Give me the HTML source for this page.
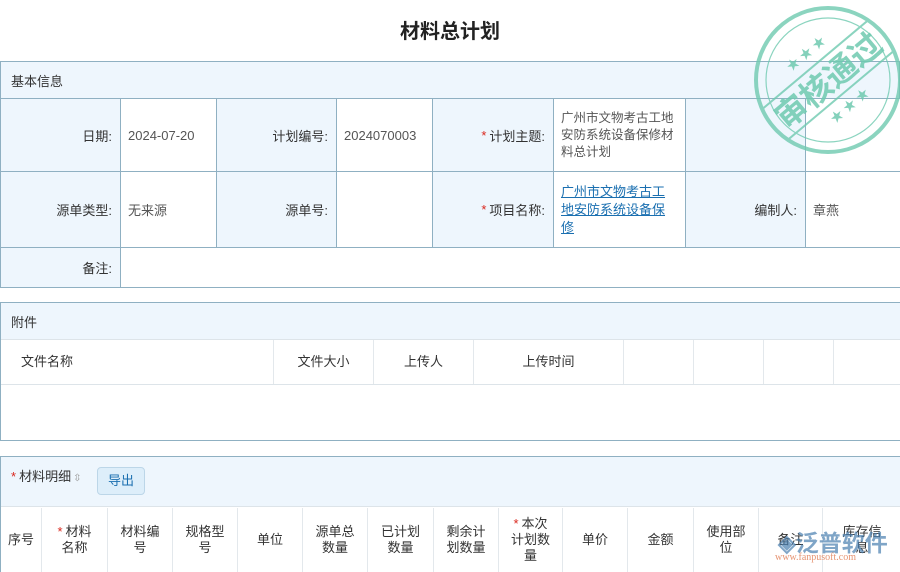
<!DOCTYPE html>
<html><head><meta charset="utf-8"><style>
*{margin:0;padding:0;box-sizing:border-box}
body{width:900px;height:572px;overflow:hidden;background:#fff;font-family:"Liberation Sans","Noto Sans CJK SC",sans-serif;font-size:13px;color:#333;position:relative}
.a{position:absolute}
.c{position:absolute;display:flex;align-items:center;border-right:1px solid #8fb0c2;border-bottom:1px solid #8fb0c2}
.l{background:#eef6fd;justify-content:flex-end;padding-right:8px}
.v{background:#fff;padding-left:7px;color:#555}
.s{color:#d9261c;margin-right:3px}
.h{position:absolute;display:flex;align-items:center;justify-content:center;text-align:center;border-left:1px solid #e3e8ec;height:100%;line-height:16px}
</style></head><body>
<div class="a" style="left:0;top:15px;width:900px;text-align:center;font-size:20px;font-weight:bold;color:#222">材料总计划</div>

<div class="a" style="left:0;top:61px;width:900px;height:227px;border-top:1px solid #8fb0c2;border-left:1px solid #8fb0c2"></div>
<div class="c" style="left:0;top:62px;width:900px;height:37px;background:#eef6fd;padding-left:10px;border-left:1px solid #8fb0c2">基本信息</div>
<div class="c l" style="left:0;top:99px;width:121px;height:73px;border-left:1px solid #8fb0c2">日期:</div>
<div class="c v" style="left:121px;top:99px;width:96px;height:73px">2024-07-20</div>
<div class="c l" style="left:217px;top:99px;width:120px;height:73px">计划编号:</div>
<div class="c v" style="left:337px;top:99px;width:96px;height:73px">2024070003</div>
<div class="c l" style="left:433px;top:99px;width:121px;height:73px"><span class="s">*</span>计划主题:</div>
<div class="c v" style="left:554px;top:99px;width:132px;height:73px;font-size:12.5px;line-height:17px">广州市文物考古工地安防系统设备保修材料总计划</div>
<div class="c l" style="left:686px;top:99px;width:120px;height:73px"></div>
<div class="c v" style="left:806px;top:99px;width:94px;height:73px;border-right:none"></div>
<div class="c l" style="left:0;top:172px;width:121px;height:76px;border-left:1px solid #8fb0c2">源单类型:</div>
<div class="c v" style="left:121px;top:172px;width:96px;height:76px">无来源</div>
<div class="c l" style="left:217px;top:172px;width:120px;height:76px">源单号:</div>
<div class="c v" style="left:337px;top:172px;width:96px;height:76px"></div>
<div class="c l" style="left:433px;top:172px;width:121px;height:76px"><span class="s">*</span>项目名称:</div>
<div class="c v" style="left:554px;top:172px;width:132px;height:76px;line-height:18px;color:#1a6fb0;text-decoration:underline;padding-right:20px">广州市文物考古工地安防系统设备保修</div>
<div class="c l" style="left:686px;top:172px;width:120px;height:76px">编制人:</div>
<div class="c v" style="left:806px;top:172px;width:94px;height:76px;border-right:none">章燕</div>
<div class="c l" style="left:0;top:248px;width:121px;height:40px;border-left:1px solid #8fb0c2">备注:</div>
<div class="c v" style="left:121px;top:248px;width:779px;height:40px;border-right:none"></div>

<div class="a" style="left:0;top:302px;width:900px;height:139px;border:1px solid #8fb0c2;border-right:none"></div>
<div class="a" style="left:1px;top:303px;width:899px;height:37px;background:#eef6fd;border-bottom:1px solid #dde4e9;padding:9px 0 0 10px">附件</div>
<div class="a" style="left:1px;top:340px;width:899px;height:45px;border-bottom:1px solid #dde4e9">
<div class="h" style="left:0;width:272px;border:none;justify-content:flex-start;padding-left:20px">文件名称</div>
<div class="h" style="left:272px;width:100px">文件大小</div>
<div class="h" style="left:372px;width:100px">上传人</div>
<div class="h" style="left:472px;width:150px">上传时间</div>
<div class="h" style="left:622px;width:70px"></div>
<div class="h" style="left:692px;width:70px"></div>
<div class="h" style="left:762px;width:70px"></div>
<div class="h" style="left:832px;width:70px"></div>
</div>

<div class="a" style="left:0;top:456px;width:900px;height:116px;border-top:1px solid #8fb0c2;border-left:1px solid #8fb0c2"></div>
<div class="a" style="left:1px;top:457px;width:899px;height:50px;background:#eef6fd;border-bottom:1px solid #dde4e9"></div>
<div class="a" style="left:11px;top:466px"><span class="s">*</span>材料明细<span style="color:#999;font-size:10px;margin-left:2px">⇳</span></div>
<div class="a" style="left:97px;top:467px;width:48px;height:28px;background:#ddeefa;border:1px solid #bcd6e8;border-radius:4px;color:#1a6fb0;text-align:center;line-height:26px">导出</div>
<div class="a" style="left:1px;top:508px;width:899px;height:64px">
<div class="h" style="left:0;width:40px;border:none">序号</div>
<div class="h" style="left:40px;width:66px"><span><span class="s">*</span>材料<br>名称</span></div>
<div class="h" style="left:106px;width:65px">材料编<br>号</div>
<div class="h" style="left:171px;width:65px">规格型<br>号</div>
<div class="h" style="left:236px;width:65px">单位</div>
<div class="h" style="left:301px;width:65px">源单总<br>数量</div>
<div class="h" style="left:366px;width:66px">已计划<br>数量</div>
<div class="h" style="left:432px;width:65px">剩余计<br>划数量</div>
<div class="h" style="left:497px;width:64px"><span><span class="s">*</span>本次<br>计划数<br>量</span></div>
<div class="h" style="left:561px;width:65px">单价</div>
<div class="h" style="left:626px;width:66px">金额</div>
<div class="h" style="left:692px;width:65px">使用部<br>位</div>
<div class="h" style="left:757px;width:64px">备注</div>
<div class="h" style="left:821px;width:79px">库存信<br>息</div>
</div>
<div class="a" style="left:778px;top:524px;font-size:23px;color:#4a7fb0;opacity:.7;font-weight:bold">◈泛普软件</div>
<div class="a" style="left:775px;top:552px;font-size:10px;color:#e07a50;opacity:.8;font-family:'Liberation Serif',serif">www.fanpusoft.com</div>

<svg class="a" style="left:748px;top:2px" width="160" height="160" viewBox="0 0 160 160">
<g fill="none" stroke="#6fcab0" opacity=".8">
<circle cx="80" cy="78" r="72" stroke-width="4"/>
<circle cx="80" cy="78" r="62" stroke-width="1.2"/>
<g transform="rotate(-40 80 78)">
<line x1="10" y1="58" x2="150" y2="58" stroke-width="2"/>
<line x1="10" y1="98" x2="150" y2="98" stroke-width="2"/>
</g>
</g>
<g transform="rotate(-40 80 78)" fill="#6fcab0" opacity=".85">
<text x="80" y="90" text-anchor="middle" font-size="32" font-weight="bold" font-family="Noto Sans CJK SC">审核通过</text>
<text x="80" y="48" text-anchor="middle" font-size="13">★ ★ ★</text>
<text x="80" y="116" text-anchor="middle" font-size="13">★ ★ ★</text>
</g>
</svg>
</body></html>
